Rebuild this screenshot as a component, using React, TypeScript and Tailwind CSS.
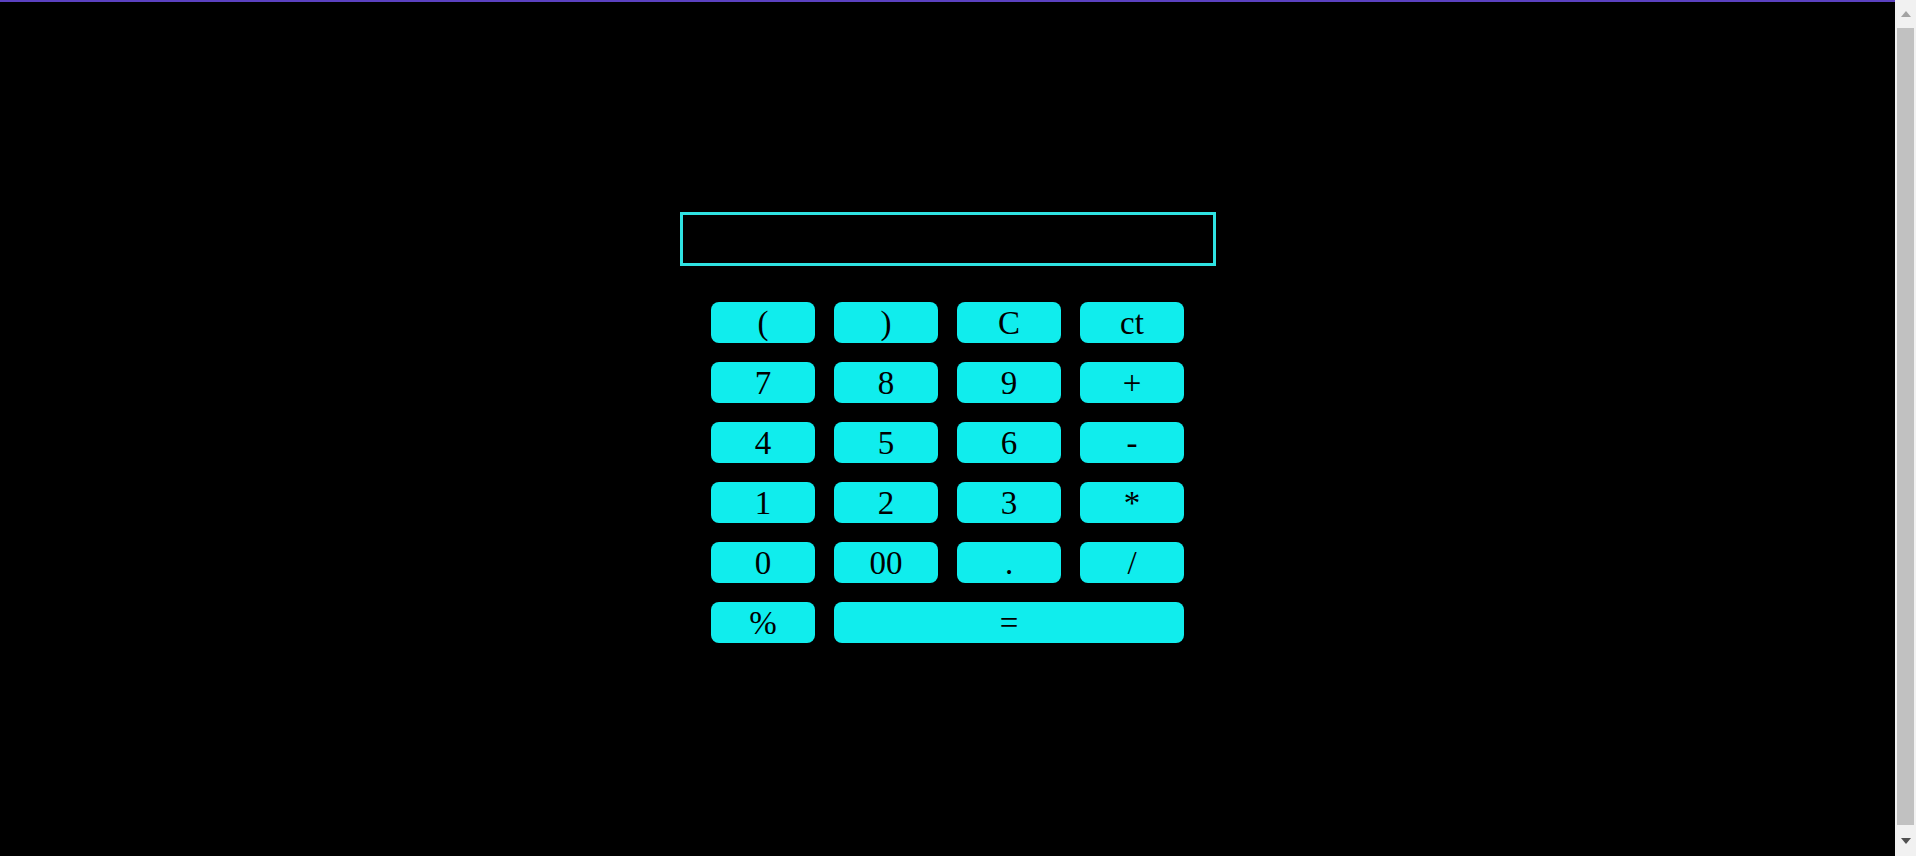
import { useState } from "react";

const rows = [
  ["(", ")", "C", "ct"],
  ["7", "8", "9", "+"],
  ["4", "5", "6", "-"],
  ["1", "2", "3", "*"],
  ["0", "00", ".", "/"],
];

const App = () => {
  const [value, setValue] = useState("");

  const press = (key: string) => {
    if (key === "C") return setValue("");
    if (key === "ct") return setValue(value.slice(0, -1));
    if (key === "=") {
      try {
        // eslint-disable-next-line no-new-func
        setValue(String(Function(`return (${value.replace(/%/g, "/100")})`)()));
      } catch {
        setValue("Error");
      }
      return;
    }
    setValue(value + key);
  };

  const btn =
    "h-[41px] pt-[2px] rounded-[8px] bg-[#10eded] text-black text-[33px] leading-none font-['Liberation_Serif',serif] flex items-center justify-center";

  return (
    <div className="flex h-[856px] overflow-hidden">
      <main className="flex-1 bg-black border-t-2 border-[#5b41c0] font-['Liberation_Serif',serif]">
        <div className="flex flex-col items-center pt-[210px]">
          <input
            value={value}
            onChange={(e) => setValue(e.target.value)}
            className="w-[536px] h-[54px] bg-black border-[3px] border-[#2fe3e3] outline-none text-white text-[28px] px-2 text-right"
          />
          <div className="grid grid-cols-[repeat(4,104px)] gap-x-[19px] gap-y-[19px] mt-[36px]">
            {rows.flat().map((k) => (
              <button key={k} className={btn} onClick={() => press(k)}>
                {k}
              </button>
            ))}
            <button className={btn} onClick={() => press("%")}>
              %
            </button>
            <button className={`${btn} col-span-3`} onClick={() => press("=")}>
              =
            </button>
          </div>
        </div>
      </main>

      {/* scrollbar */}
      <aside className="w-[21px] bg-[#f1f1f1] flex flex-col">
        <div className="h-[28px] flex items-center justify-center">
          <div className="w-0 h-0 border-x-[5px] border-x-transparent border-b-[6px] border-b-[#a3a3a3]" />
        </div>
        <div className="flex-1 ml-[2px] mr-[2px] bg-[#c1c1c1]" />
        <div className="h-[31px] flex items-center justify-center">
          <div className="w-0 h-0 border-x-[5px] border-x-transparent border-t-[6px] border-t-[#505050]" />
        </div>
      </aside>
    </div>
  );
};

export default App;
